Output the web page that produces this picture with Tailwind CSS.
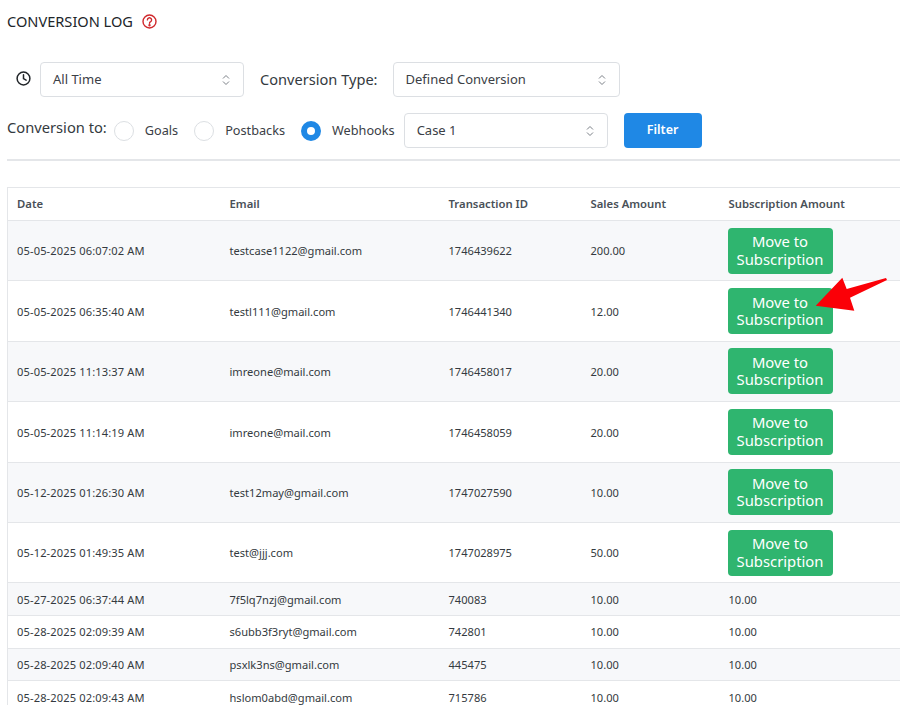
<!DOCTYPE html>
<html lang="en">
<head>
<meta charset="UTF-8" />
<title>Conversion Log</title>
<script src="https://cdn.jsdelivr.net/npm/@tailwindcss/browser@4"></script>
</head>
<body class="bg-white h-[705px] w-[900px] overflow-hidden relative font-['Noto_Sans',sans-serif] text-[#212529]">
  <div class="pl-[7px] pt-[11px]">
    <!-- title -->
    <div class="flex items-center gap-[9px] h-[20px]">
      <h1 class="text-[14.6px] leading-[20px] font-normal">CONVERSION LOG</h1>
      <svg width="15" height="15" viewBox="0 0 15 15" fill="none" stroke="#d0282c" stroke-width="1.4"><circle cx="7.5" cy="7.5" r="6.5"/><path d="M5.4 5.9a2.1 2.1 0 1 1 3.2 1.8c-.7.4-1.1.8-1.1 1.6" stroke-linecap="round"/><circle cx="7.5" cy="11.2" r=".5" fill="#d0282c"/></svg>
    </div>

    <!-- filters -->
    <div class="flex items-center mt-[31px] h-[35px]">
      <svg class="ml-[9px] mt-[-2px]" width="15" height="15" viewBox="0 0 15 15" fill="none" stroke="#212529" stroke-width="1.5" stroke-linecap="round" stroke-linejoin="round"><circle cx="7.5" cy="7.5" r="6.4"/><path d="M7.5 3.8v3.9l2.6 1.4"/></svg>
      <div class="ml-[9px] w-[204px] h-[35px] border border-[#dcdfe3] rounded-[4px] flex items-center justify-between pl-[12px] pr-[13px] text-[13px] text-[#3b4046]">
        <span class="pt-[1px]">All Time</span>
        <svg width="8" height="12" viewBox="0 0 8 12" fill="none" stroke="#7b8087" stroke-width="1"><path d="M1 4.5l3-3 3 3M1 7.5l3 3 3-3"/></svg>
      </div>
      <span class="ml-[16px] text-[14.6px] text-[#343a40]">Conversion Type:</span>
      <div class="ml-[15px] w-[227px] h-[35px] border border-[#dcdfe3] rounded-[4px] flex items-center justify-between pl-[12px] pr-[13px] text-[13px] text-[#3b4046]">
        <span class="pt-[1px]">Defined Conversion</span>
        <svg width="8" height="12" viewBox="0 0 8 12" fill="none" stroke="#7b8087" stroke-width="1"><path d="M1 4.5l3-3 3 3M1 7.5l3 3 3-3"/></svg>
      </div>
    </div>
    <div class="flex items-center mt-[16px] h-[35px]">
      <span class="text-[14.7px] text-[#343a40] mt-[-6px]">Conversion to:</span>
      <span class="ml-[7px] w-[20px] h-[20px] rounded-full border border-[#dcdfe3]"></span>
      <span class="ml-[11px] text-[12.7px] text-[#3b4046]">Goals</span>
      <span class="ml-[16px] w-[20px] h-[20px] rounded-full border border-[#dcdfe3]"></span>
      <span class="ml-[11px] text-[12.7px] text-[#3b4046]">Postbacks</span>
      <span class="ml-[16px] w-[20px] h-[20px] rounded-full border-[6px] border-[#1f88e5]"></span>
      <span class="ml-[11px] text-[12.7px] text-[#3b4046]">Webhooks</span>
      <div class="ml-[9px] w-[204px] h-[35px] border border-[#dcdfe3] rounded-[4px] flex items-center justify-between pl-[12px] pr-[13px] text-[13px] text-[#3b4046]">
        <span>Case 1</span>
        <svg width="8" height="12" viewBox="0 0 8 12" fill="none" stroke="#7b8087" stroke-width="1"><path d="M1 4.5l3-3 3 3M1 7.5l3 3 3-3"/></svg>
      </div>
      <button class="ml-[16px] w-[78px] h-[35px] bg-[#1f88e5] rounded-[4px] text-white text-[12.5px] font-semibold">Filter</button>
    </div>
    <div class="mt-[11px] border-t-2 border-[#e4e6e9]"></div>

    <!-- log table -->
    <table class="mt-[26px] table-fixed border-collapse w-[893px] border-l border-t border-[#e4e6e9] text-[11.1px] text-[#343a40] text-left">
      <colgroup>
        <col class="w-[213px]" />
        <col class="w-[219px]" />
        <col class="w-[142px]" />
        <col class="w-[138px]" />
        <col />
      </colgroup>
      <thead>
        <tr class="h-[33px] border-b border-[#e4e6e9] text-[#495057] text-[11.3px]">
          <th class="pl-[9px] font-semibold">Date</th>
          <th class="pl-[9px] font-semibold">Email</th>
          <th class="pl-[9px] font-semibold">Transaction ID</th>
          <th class="pl-[9px] font-semibold">Sales Amount</th>
          <th class="pl-[9px] font-semibold">Subscription Amount</th>
        </tr>
      </thead>
      <tbody class="[&>tr>td]:pt-[2px] [&>tr>td:first-child]:tracking-[0.13px]">
        <tr class="h-[60.4px] bg-[#f7f8fa] border-b border-[#e4e6e9]">
          <td class="pl-[9px]">05-05-2025 06:07:02 AM</td><td class="pl-[9px]">testcase1122@gmail.com</td><td class="pl-[9px]">1746439622</td><td class="pl-[9px]">200.00</td>
          <td class="pl-[8px] pt-0!"><button class="w-[105px] h-[46px] bg-[#2fb56f] rounded-[4px] text-white text-[14.8px] leading-[17.5px]">Move to Subscription</button></td>
        </tr>
        <tr class="h-[60.4px] border-b border-[#e4e6e9]">
          <td class="pl-[9px]">05-05-2025 06:35:40 AM</td><td class="pl-[9px]">testl111@gmail.com</td><td class="pl-[9px]">1746441340</td><td class="pl-[9px]">12.00</td>
          <td class="pl-[8px] pt-0!"><button class="w-[105px] h-[46px] bg-[#2fb56f] rounded-[4px] text-white text-[14.8px] leading-[17.5px]">Move to Subscription</button></td>
        </tr>
        <tr class="h-[60.4px] bg-[#f7f8fa] border-b border-[#e4e6e9]">
          <td class="pl-[9px]">05-05-2025 11:13:37 AM</td><td class="pl-[9px]">imreone@mail.com</td><td class="pl-[9px]">1746458017</td><td class="pl-[9px]">20.00</td>
          <td class="pl-[8px] pt-0!"><button class="w-[105px] h-[46px] bg-[#2fb56f] rounded-[4px] text-white text-[14.8px] leading-[17.5px]">Move to Subscription</button></td>
        </tr>
        <tr class="h-[60.4px] border-b border-[#e4e6e9]">
          <td class="pl-[9px]">05-05-2025 11:14:19 AM</td><td class="pl-[9px]">imreone@mail.com</td><td class="pl-[9px]">1746458059</td><td class="pl-[9px]">20.00</td>
          <td class="pl-[8px] pt-0!"><button class="w-[105px] h-[46px] bg-[#2fb56f] rounded-[4px] text-white text-[14.8px] leading-[17.5px]">Move to Subscription</button></td>
        </tr>
        <tr class="h-[60.4px] bg-[#f7f8fa] border-b border-[#e4e6e9]">
          <td class="pl-[9px]">05-12-2025 01:26:30 AM</td><td class="pl-[9px]">test12may@gmail.com</td><td class="pl-[9px]">1747027590</td><td class="pl-[9px]">10.00</td>
          <td class="pl-[8px] pt-0!"><button class="w-[105px] h-[46px] bg-[#2fb56f] rounded-[4px] text-white text-[14.8px] leading-[17.5px]">Move to Subscription</button></td>
        </tr>
        <tr class="h-[60.4px] border-b border-[#e4e6e9]">
          <td class="pl-[9px]">05-12-2025 01:49:35 AM</td><td class="pl-[9px]">test@jjj.com</td><td class="pl-[9px]">1747028975</td><td class="pl-[9px]">50.00</td>
          <td class="pl-[8px] pt-0!"><button class="w-[105px] h-[46px] bg-[#2fb56f] rounded-[4px] text-white text-[14.8px] leading-[17.5px]">Move to Subscription</button></td>
        </tr>
        <tr class="h-[32.6px] bg-[#f7f8fa] border-b border-[#e4e6e9]">
          <td class="pl-[9px]">05-27-2025 06:37:44 AM</td><td class="pl-[9px]">7f5lq7nzj@gmail.com</td><td class="pl-[9px]">740083</td><td class="pl-[9px]">10.00</td><td class="pl-[9px]">10.00</td>
        </tr>
        <tr class="h-[32.6px] border-b border-[#e4e6e9]">
          <td class="pl-[9px]">05-28-2025 02:09:39 AM</td><td class="pl-[9px]">s6ubb3f3ryt@gmail.com</td><td class="pl-[9px]">742801</td><td class="pl-[9px]">10.00</td><td class="pl-[9px]">10.00</td>
        </tr>
        <tr class="h-[32.6px] bg-[#f7f8fa] border-b border-[#e4e6e9]">
          <td class="pl-[9px]">05-28-2025 02:09:40 AM</td><td class="pl-[9px]">psxlk3ns@gmail.com</td><td class="pl-[9px]">445475</td><td class="pl-[9px]">10.00</td><td class="pl-[9px]">10.00</td>
        </tr>
        <tr class="h-[32.6px] border-b border-[#e4e6e9]">
          <td class="pl-[9px]">05-28-2025 02:09:43 AM</td><td class="pl-[9px]">hslom0abd@gmail.com</td><td class="pl-[9px]">715786</td><td class="pl-[9px]">10.00</td><td class="pl-[9px]">10.00</td>
        </tr>
      </tbody>
    </table>
  </div>

  <!-- red annotation arrow over the second button -->
  <svg class="absolute left-[810px] top-[272px]" width="80" height="44" viewBox="0 0 80 44"><polygon points="5.7,33.7 32.3,5.7 36.7,17 76,6 77,8 40,25.7 44.3,38.7" fill="#fb0007"/></svg>
</body>
</html>
